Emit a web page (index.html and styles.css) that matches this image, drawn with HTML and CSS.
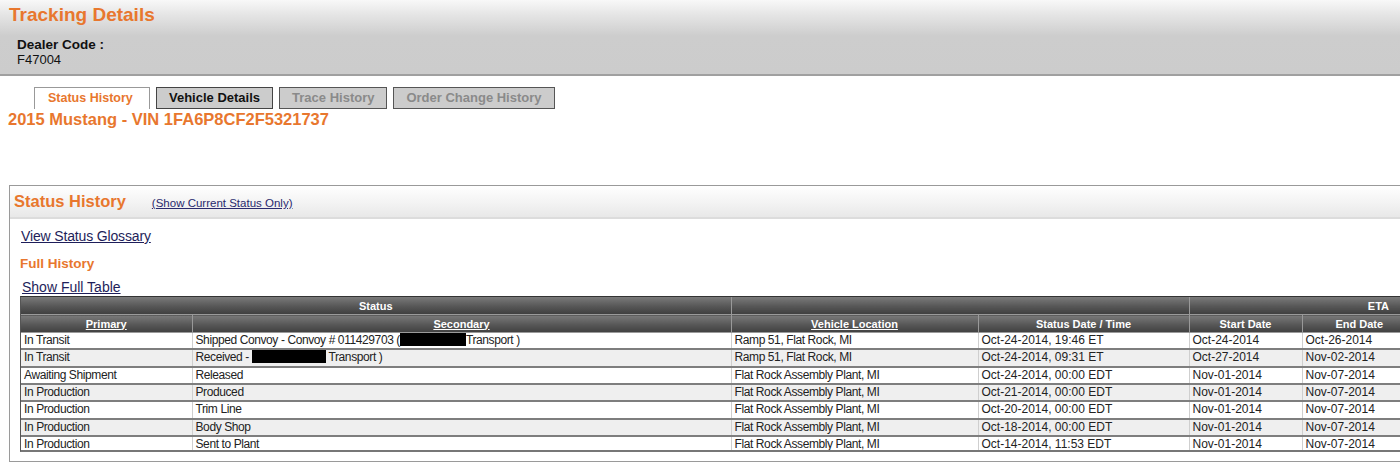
FILE: index.html
```html
<!DOCTYPE html>
<html lang="en">
<head>
    <meta charset="UTF-8">
    <meta name="viewport" content="width=device-width, initial-scale=1.0">
    <title>Tracking Details</title>
    <link rel="stylesheet" href="styles.css">
</head>
<body>
<div class="page">
    <div class="header">
        <h1>Tracking Details</h1>
        <div class="dealer">
            <div class="dealer-label">Dealer Code :</div>
            <div class="dealer-code">F47004</div>
        </div>
    </div>

    <div class="tabs">
        <span class="tab active">Status History</span>
        <span class="tab">Vehicle Details</span>
        <span class="tab disabled">Trace History</span>
        <span class="tab disabled">Order Change History</span>
    </div>
    <h2 class="vin">2015 Mustang - VIN 1FA6P8CF2F5321737</h2>

    <div class="panel">
        <div class="panel-head">
            <span class="panel-title">Status History</span>
            <a href="#" class="small-link">(Show Current Status Only)</a>
        </div>
        <div class="panel-body">
            <a href="#" class="link glossary">View Status Glossary</a>
            <div class="section-title">Full History</div>
            <a href="#" class="link full-table">Show Full Table</a>

            <div class="grid-wrap">
                <table class="grid">
                    <colgroup>
                        <col style="width:171px">
                        <col style="width:539px">
                        <col style="width:247px">
                        <col style="width:211px">
                        <col style="width:113px">
                        <col style="width:114px">
                    </colgroup>
                    <thead>
                        <tr class="group-row">
                            <th colspan="2">Status</th>
                            <th colspan="2"></th>
                            <th colspan="2" class="eta">ETA</th>
                        </tr>
                        <tr>
                            <th><a href="#">Primary</a></th>
                            <th><a href="#">Secondary</a></th>
                            <th><a href="#">Vehicle Location</a></th>
                            <th>Status Date / Time</th>
                            <th>Start Date</th>
                            <th>End Date</th>
                        </tr>
                    </thead>
                    <tbody>
                        <tr>
                            <td>In Transit</td>
                            <td>Shipped Convoy - Convoy # 011429703 (<span class="redact r1"></span>Transport )</td>
                            <td>Ramp 51, Flat Rock, MI</td>
                            <td>Oct-24-2014, 19:46 ET</td>
                            <td>Oct-24-2014</td>
                            <td>Oct-26-2014</td>
                        </tr>
                        <tr>
                            <td>In Transit</td>
                            <td>Received - <span class="redact r2"></span> Transport )</td>
                            <td>Ramp 51, Flat Rock, MI</td>
                            <td>Oct-24-2014, 09:31 ET</td>
                            <td>Oct-27-2014</td>
                            <td>Nov-02-2014</td>
                        </tr>
                        <tr>
                            <td>Awaiting Shipment</td>
                            <td>Released</td>
                            <td>Flat Rock Assembly Plant, MI</td>
                            <td>Oct-24-2014, 00:00 EDT</td>
                            <td>Nov-01-2014</td>
                            <td>Nov-07-2014</td>
                        </tr>
                        <tr>
                            <td>In Production</td>
                            <td>Produced</td>
                            <td>Flat Rock Assembly Plant, MI</td>
                            <td>Oct-21-2014, 00:00 EDT</td>
                            <td>Nov-01-2014</td>
                            <td>Nov-07-2014</td>
                        </tr>
                        <tr>
                            <td>In Production</td>
                            <td>Trim Line</td>
                            <td>Flat Rock Assembly Plant, MI</td>
                            <td>Oct-20-2014, 00:00 EDT</td>
                            <td>Nov-01-2014</td>
                            <td>Nov-07-2014</td>
                        </tr>
                        <tr>
                            <td>In Production</td>
                            <td>Body Shop</td>
                            <td>Flat Rock Assembly Plant, MI</td>
                            <td>Oct-18-2014, 00:00 EDT</td>
                            <td>Nov-01-2014</td>
                            <td>Nov-07-2014</td>
                        </tr>
                        <tr>
                            <td>In Production</td>
                            <td>Sent to Plant</td>
                            <td>Flat Rock Assembly Plant, MI</td>
                            <td>Oct-14-2014, 11:53 EDT</td>
                            <td>Nov-01-2014</td>
                            <td>Nov-07-2014</td>
                        </tr>
                    </tbody>
                </table>
            </div>
        </div>
    </div>
</div>
</body>
</html>
```

FILE: styles.css
```css
body {
    margin: 0;
    font-family: "Liberation Sans", Arial, sans-serif;
    color: #222;
    background: #fff;
}

.page {
    width: 100%;
    overflow: hidden;
}

.header {
    height: 74px;
    background: linear-gradient(to bottom, #f8f8f8 0px, #e6e6e6 14px, #cdcdcd 36px, #cccccc 74px);
    border-bottom: 2px solid #a0a0a0;
}

.header h1 {
    margin: 0;
    padding: 4px 0 0 9px;
    font-size: 19px;
    line-height: 22px;
    color: #e8772e;
}

.dealer {
    padding: 11px 0 0 17px;
    font-size: 13.5px;
    line-height: 15px;
    color: #111;
}

.dealer-label {
    font-weight: bold;
}

.dealer-code {
    font-size: 13px;
}

.tabs {
    display: flex;
    gap: 6px;
    margin: 11px 0 0 34px;
    height: 22px;
}

.tab {
    display: inline-block;
    height: 20px;
    line-height: 20px;
    padding: 0 12px;
    font-size: 13px;
    font-weight: bold;
    background: #cccccc;
    border: 1px solid #444;
    color: #111;
}

.tab.active {
    background: #fff;
    color: #e8772e;
    border-color: #999;
    border-bottom: none;
    height: 21px;
    width: 88px;
    padding: 0 13px;
    font-size: 12.5px;
}

.tab.disabled {
    color: #8a8a8a;
    border-color: #555;
}

.vin {
    margin: 1px 0 0 8px;
    font-size: 16.5px;
    line-height: 18px;
    color: #e8772e;
}

.panel {
    margin: 57px 0 0 9px;
    width: 1430px;
    border: 1px solid #9a9a9a;
    padding-bottom: 9px;
}

.panel-head {
    height: 31px;
    display: flex;
    align-items: center;
    gap: 26px;
    padding-left: 4px;
    background: linear-gradient(to bottom, #ffffff 0%, #f4f4f4 50%, #e8e8e8 100%);
    border-bottom: 2px solid #dcdcdc;
}

.panel-title {
    font-size: 16.5px;
    font-weight: bold;
    color: #e8772e;
}

.small-link {
    font-size: 11.5px;
    color: #2a2a6e;
    margin-top: 3px;
}

.panel-body {
    padding: 9px 0 0 10px;
}

.link {
    display: block;
    font-size: 14px;
    line-height: 17px;
    color: #1e1e5a;
}

.glossary {
    margin-left: 1px;
    letter-spacing: -0.15px;
}

.section-title {
    margin: 11px 0 0 0;
    font-size: 13.5px;
    line-height: 16px;
    font-weight: bold;
    color: #e8772e;
}

.full-table {
    margin: 7px 0 0 2px;
}

.grid-wrap {
    height: 153px;
    overflow: hidden;
    border-left: 1px solid #555;
    border-top: 1px solid #333;
    border-bottom: 2px solid #777;
    width: 1410px;
}

.grid {
    table-layout: fixed;
    border-collapse: collapse;
    width: 1395px;
    font-size: 12px;
}

.grid th {
    height: 17px;
    padding: 0;
    font-size: 11px;
    font-weight: bold;
    color: #fff;
    text-align: center;
    background: linear-gradient(to bottom, #7a7a7a 0%, #575757 55%, #404040 100%);
    border-left: 1px solid #999;
    border-bottom: 1px solid #9a9a9a;
}

.grid th:first-child {
    border-left: none;
}

.grid th a {
    color: #fff;
}

.grid .eta {
    text-align: right;
    padding-right: 27px;
}

.grid td {
    height: 15.33px;
    line-height: 15.33px;
    padding: 0 0 0 3px;
    white-space: nowrap;
    overflow: hidden;
    color: #222;
    border-left: 1px solid #cfcfcf;
    border-bottom: 2px solid #7e7e7e;
}

.grid td:nth-child(-n+3) {
    letter-spacing: -0.4px;
}

.grid td:first-child {
    border-left: none;
}

.grid tbody tr:nth-child(even) td {
    background: #efefef;
}

.redact {
    display: inline-block;
    height: 13px;
    background: #000;
    vertical-align: -2px;
}

.r1 {
    width: 66px;
}

.r2 {
    width: 74px;
}
```
